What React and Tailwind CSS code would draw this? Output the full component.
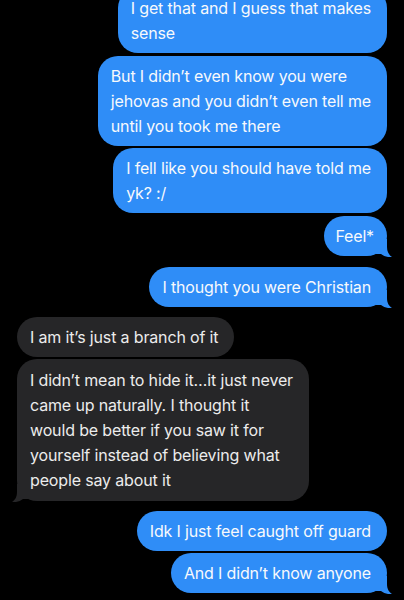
import React from "react";

const BLUE = "#2f8df7";
const GRAY = "#262628";

function TailRight() {
  return (
    <svg
      className="absolute right-[-5px] bottom-[-1px]"
      width="16"
      height="18"
      viewBox="0 0 16 18"
    >
      <path d="M0 0 L11 0 L11 8 C11 13 13 16 16 18 C12 18.5 8 17.5 5 15 L0 15 Z" fill={BLUE} />
    </svg>
  );
}

function TailLeft() {
  return (
    <svg
      className="absolute left-[-5px] bottom-[-1px]"
      width="16"
      height="18"
      viewBox="0 0 16 18"
    >
      <path d="M16 0 L5 0 L5 8 C5 13 3 16 0 18 C4 18.5 8 17.5 11 15 L16 15 Z" fill={GRAY} />
    </svg>
  );
}

function Sent({ lines, tail, className = "", pad = "pl-[13px] pr-[16px]" }) {
  return (
    <div className={`flex justify-end ${className}`}>
      <div className={`relative rounded-[20px] bg-[#2f8df7] ${pad} py-[7.5px] text-[16px] leading-[25px] tracking-[-0.15px] text-[#f7f9fc]`}>
        {lines.map((l, i) => (
          <div key={i} className="relative z-10 whitespace-nowrap">{l}</div>
        ))}
        {tail && <TailRight />}
      </div>
    </div>
  );
}

function Received({ lines, tail, className = "", py = "py-[7.5px]" }) {
  return (
    <div className={`flex justify-start ${className}`}>
      <div className={`relative rounded-[20px] bg-[#262628] pl-[13px] pr-[16px] ${py} text-[16px] leading-[25px] tracking-[-0.15px] text-[#ececec]`}>
        {lines.map((l, i) => (
          <div key={i} className="relative z-10 whitespace-nowrap">{l}</div>
        ))}
        {tail && <TailLeft />}
      </div>
    </div>
  );
}

export default function App() {
  return (
    <div
      className="h-[600px] w-[404px] overflow-hidden bg-black px-[17px]"
      style={{ fontFamily: "Inter, 'Liberation Sans', sans-serif" }}
    >
      <div className="-mt-[12px] flex flex-col">
        <Sent lines={["I get that and I guess that makes", "sense"]} />
        <Sent className="mt-[3px]" lines={["But I didn’t even know you were", "jehovas and you didn’t even tell me", "until you took me there"]} />
        <Sent className="mt-[2px]" lines={["I fell like you should have told me", "yk? :/"]} />
        <Sent className="mt-[3px]" pad="pl-[11px] pr-[13px]" lines={["Feel*"]} tail />
        <Sent className="mt-[11px]" lines={["I thought you were Christian"]} tail />
        <Received className="mt-[10px]" lines={["I am it’s just a branch of it"]} />
        <Received
          className="mt-[2px]"
          py="pt-[8.5px] pb-[8.5px]"
          lines={[
            "I didn’t mean to hide it…it just never",
            "came up naturally. I thought it",
            "would be better if you saw it for",
            "yourself instead of believing what",
            "people say about it",
          ]}
          tail
        />
        <Sent className="mt-[10px]" lines={["Idk I just feel caught off guard"]} />
        <Sent className="mt-[2px]" lines={["And I didn’t know anyone"]} tail />
      </div>
    </div>
  );
}
